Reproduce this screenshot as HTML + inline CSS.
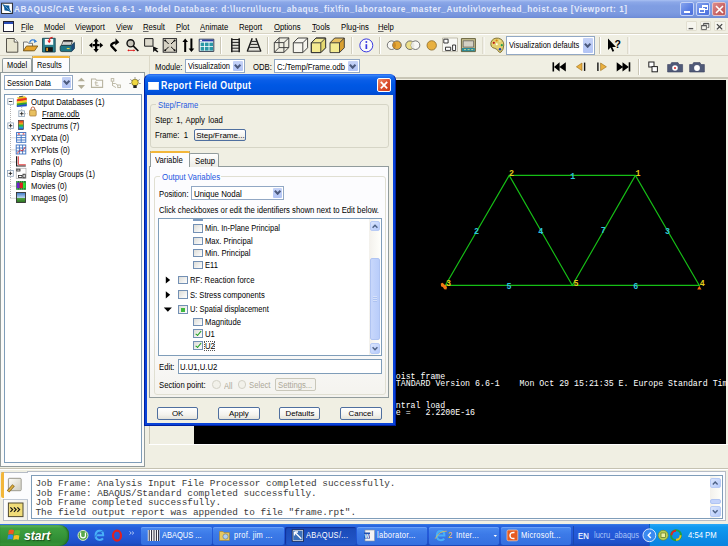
<!DOCTYPE html>
<html><head><meta charset="utf-8">
<style>
*{margin:0;padding:0;box-sizing:border-box}
html,body{width:728px;height:546px;overflow:hidden;background:#F0EFE3;font-family:"Liberation Sans",sans-serif;font-size:7.7px;color:#000}
.a{position:absolute}
.t{position:absolute;white-space:nowrap;line-height:10px;height:10px;transform:scaleX(0.909);transform-origin:0 50%}
svg{position:absolute;overflow:visible}
/* title */
#title{left:0;top:0;width:728px;height:18px;background:linear-gradient(#a9c0f2 0,#8ca8e8 2px,#7f9de2 6px,#7e9ce1 12px,#7593dc 16px,#6c8ad4 18px)}
.tb{position:absolute;top:2px;width:14px;height:14px;border:1px solid #c4d2f6;border-radius:2px;background:linear-gradient(135deg,#86a4ee,#5a7ee2 60%,#4c70dc)}
/* menu */
.mi{position:absolute;top:22px;line-height:10px;white-space:nowrap;transform:scaleX(0.909);transform-origin:0 50%}
.sep{position:absolute;width:2px;border-left:1px solid #c5c2b2;border-right:1px solid #fff}
.combo{position:absolute;background:#fff;border:1px solid #92a8c4}
.dd{position:absolute;top:1px;right:1px;bottom:1px;width:10px;background:linear-gradient(#c6d3f7,#b2c4f5);border-radius:1px}
.dd:after{content:"";position:absolute;left:50%;top:50%;width:3.3px;height:3.3px;margin-left:-2.7px;margin-top:-3.6px;border-right:2.1px solid #4d5b7e;border-bottom:2.1px solid #4d5b7e;transform:rotate(45deg)}
.btn{position:absolute;border:1px solid #4f6f9f;border-radius:2px;background:linear-gradient(#fff,#f4f3ee 60%,#e3e2da);text-align:center;line-height:11px;white-space:nowrap}
.cb{position:absolute;width:9px;height:9px;border:1px solid #7390b4;background:linear-gradient(135deg,#dcdcd7,#fff)}
.ck:after{content:"";position:absolute;left:2.4px;top:-0.2px;width:2.4px;height:4.6px;border-right:1.6px solid #21a121;border-bottom:1.6px solid #21a121;transform:rotate(40deg)}
.mono{font-family:"Liberation Mono",monospace}
</style></head><body>

<!-- TITLE BAR -->
<div id="title" class="a"></div>
<svg style="left:0;top:0" width="16" height="16"><rect x="1.6" y="3.2" width="10.8" height="10.3" fill="#fff" stroke="#1a1a1a" stroke-width="0.9"/>
<path d="M2.1 3.7Q5.5 5.8 9.3 5.6Q8.8 9 11.9 13Q8 10.4 4.6 10.6Q5 7.2 2.1 3.7Z" fill="#0a5a9a"/>
<path d="M4.8 5.8L10 11" stroke="#d0e4f4" stroke-width="0.7" stroke-dasharray="1 0.8"/></svg>
<div class="t" style="transform:scaleX(0.84);left:14px;top:4px;color:#e4eafb;font-weight:bold;font-size:9.8px;letter-spacing:0.66px">ABAQUS/CAE Version 6.6-1 - Model Database: d:\lucru\lucru_abaqus_fix\fin_laboratoare_master_Autoliv\overhead_hoist.cae [Viewport: 1]</div>
<div class="tb" style="left:680px"><div class="a" style="left:3px;top:8px;width:6px;height:2px;background:#fff"></div></div>
<div class="tb" style="left:696px"><div class="a" style="left:5px;top:2px;width:6px;height:5px;border:1px solid #fff;border-top-width:2px"></div><div class="a" style="left:2px;top:5px;width:6px;height:5px;border:1px solid #fff;border-top-width:2px;background:#6384e2"></div></div>
<div class="tb" style="left:712px;border-color:#e8c0c0;background:linear-gradient(135deg,#dc8a8a,#c86464 60%,#bc5858)"><svg style="left:2px;top:2px" width="9" height="9"><path d="M1 1L8 8M8 1L1 8" stroke="#fff" stroke-width="1.6"/></svg></div>

<!-- MENU BAR -->
<div class="a" style="left:0;top:33px;width:728px;height:1px;background:#d8d4c4"></div>
<div class="a" style="left:3px;top:21px;width:11px;height:11px;border:1px solid #223;background:#fff"><div class="a" style="left:0;top:0;width:9px;height:2px;background:#2a4db8"></div></div>
<div class="mi" style="font-size:8.47px;left:20.6px"><span style="text-decoration:underline;text-underline-offset:0.8px;text-decoration-thickness:0.8px;text-decoration-color:#666">F</span>ile</div>
<div class="mi" style="font-size:8.47px;left:43.7px"><span style="text-decoration:underline;text-underline-offset:0.8px;text-decoration-thickness:0.8px;text-decoration-color:#666">M</span>odel</div>
<div class="mi" style="font-size:8.47px;left:75px">Vie<span style="text-decoration:underline;text-underline-offset:0.8px;text-decoration-thickness:0.8px;text-decoration-color:#666">w</span>port</div>
<div class="mi" style="font-size:8.47px;left:116.3px"><span style="text-decoration:underline;text-underline-offset:0.8px;text-decoration-thickness:0.8px;text-decoration-color:#666">V</span>iew</div>
<div class="mi" style="font-size:8.47px;left:143px"><span style="text-decoration:underline;text-underline-offset:0.8px;text-decoration-thickness:0.8px;text-decoration-color:#666">R</span>esult</div>
<div class="mi" style="font-size:8.47px;left:176px"><span style="text-decoration:underline;text-underline-offset:0.8px;text-decoration-thickness:0.8px;text-decoration-color:#666">P</span>lot</div>
<div class="mi" style="font-size:8.47px;left:200.3px"><span style="text-decoration:underline;text-underline-offset:0.8px;text-decoration-thickness:0.8px;text-decoration-color:#666">A</span>nimate</div>
<div class="mi" style="font-size:8.47px;left:238.9px">Re<span style="text-decoration:underline;text-underline-offset:0.8px;text-decoration-thickness:0.8px;text-decoration-color:#666">p</span>ort</div>
<div class="mi" style="font-size:8.47px;left:274.4px"><span style="text-decoration:underline;text-underline-offset:0.8px;text-decoration-thickness:0.8px;text-decoration-color:#666">O</span>ptions</div>
<div class="mi" style="font-size:8.47px;left:311.7px"><span style="text-decoration:underline;text-underline-offset:0.8px;text-decoration-thickness:0.8px;text-decoration-color:#666">T</span>ools</div>
<div class="mi" style="font-size:8.47px;left:341px">Plu<span style="text-decoration:underline;text-underline-offset:0.8px;text-decoration-thickness:0.8px;text-decoration-color:#666">g</span>-ins</div>
<div class="mi" style="font-size:8.47px;left:378.3px"><span style="text-decoration:underline;text-underline-offset:0.8px;text-decoration-thickness:0.8px;text-decoration-color:#666">H</span>elp</div>
<!-- mdi buttons -->
<div class="a" style="left:686px;top:21.4px;width:10.5px;height:10px;border:1px solid #e2dfd0;border-radius:1px;background:#f6f5ee"></div>
<div class="a" style="left:699.5px;top:21.4px;width:11.5px;height:10px;border:1px solid #e2dfd0;border-radius:1px;background:#f6f5ee"></div>
<div class="a" style="left:713.5px;top:21.4px;width:12px;height:10px;border:1px solid #e2dfd0;border-radius:1px;background:#f6f5ee"></div>
<svg style="left:0;top:0" width="728" height="34">
<path d="M688.6 28.6H693.2" stroke="#555" stroke-width="1.3"/>
<path d="M703.6 23.4H708.8V27.6H707.4M703.6 23.4V25.2M701.6 25.4H706.4V29.6H701.6Z" stroke="#555" stroke-width="0.9" fill="none"/>
<path d="M701.6 25.6H706.4M703.6 23.6H708.8" stroke="#555" stroke-width="1.4"/>
<path d="M716.9 24.1L722.2 29.4M722.2 24.1L716.9 29.4" stroke="#444" stroke-width="1.3"/>
</svg>
<!-- TOOLBAR ROW 1 -->
<div class="a" style="left:0;top:34px;width:728px;height:1px;background:#fff"></div>
<div class="a" style="left:0;top:55px;width:728px;height:1px;background:#d6d2c2"></div>
<svg style="left:0;top:0" width="728" height="60">
<g stroke-linejoin="round">
<!-- new doc -->
<path d="M6.5 38.5H14.2L17.8 42.1V52.2H6.5Z" fill="#e8e5d0" stroke="#55524a" stroke-width="1"/>
<path d="M14.2 38.5V42.1H17.8" fill="#fff" stroke="#55524a" stroke-width="0.9"/>
<!-- open folder -->
<path d="M23.5 42H27.5L28.5 43.3H32.5V50.6H23.5Z" fill="#f7f7f2" stroke="#6a6a6a" stroke-width="0.9"/>
<path d="M23.3 50.8L26.5 46H37.8L34.5 50.8Z" fill="#e9a52a" stroke="#7a5a18" stroke-width="0.9"/>
<path d="M29.5 42.5Q31.5 38.3 35.6 40.8" stroke="#3c82d6" stroke-width="1.3" fill="none"/>
<path d="M34.2 39.2L37.2 41.6L34 43Z" fill="#3c82d6"/>
<!-- save -->
<path d="M42.5 38.3H55.2V52H42.5Z" fill="#2b7f8c" stroke="#1d4855" stroke-width="0.9"/>
<rect x="44.8" y="39" width="8.4" height="5.8" fill="#fafafa"/>
<rect x="45.2" y="47.2" width="7.6" height="4.6" fill="#141414"/>
<rect x="46.3" y="47.8" width="1.6" height="3.2" fill="#e9a020"/>
<path d="M52.6 37.3Q49.2 37.8 49.2 40.8" stroke="#e02020" stroke-width="1.2" fill="none"/><path d="M47.3 40.4H51.1L49.2 43.3Z" fill="#e02020"/>
<!-- print -->
<path d="M63.2 41H72.4L70.6 45.6H61.4Z" fill="#f4f4f2" stroke="#333" stroke-width="0.8"/>
<rect x="63.3" y="40" width="9.2" height="1.6" fill="#2a2a2a"/>
<path d="M63.6 42.8H70.6M63 44.2H70" stroke="#999" stroke-width="0.7"/>
<path d="M60.2 47Q60.2 45.4 61.8 45.4H71.2L74.4 42.4V48.6L71.6 51.6H61.8Q60.2 51.6 60.2 50Z" fill="#1f7686" stroke="#15343e" stroke-width="0.8"/>
<path d="M71.2 45.4L74.4 42.4V48.6L71.6 51.6Z" fill="#1f4a78"/>
<rect x="66.8" y="48" width="2.8" height="1.1" fill="#e8d040"/>
<!-- sep -->
<rect x="81" y="37" width="1" height="17" fill="#cbc7b6"/><rect x="82" y="37" width="1" height="17" fill="#fff"/>
<!-- move -->
<path d="M96.1 41V49.6M92.6 45.2H99.6" stroke="#000" stroke-width="2.3"/>
<path d="M96.1 38.2L98.8 41.4H93.4Z M96.1 52.4L98.8 49.1H93.4Z M89 45.2L92.3 42.5V47.9Z M103.2 45.2L99.9 42.5V47.9Z" fill="#000"/>
<!-- rotate -->
<path d="M116.3 51.3L111.6 46.2Q110.8 45.2 111.6 44.2Q113 42.6 115.8 42.4" stroke="#000" stroke-width="2.4" fill="none" stroke-linejoin="round"/>
<path d="M115.6 38.3L119.3 42.2L115.2 45.5Z" fill="#000"/>
<!-- zoom -->
<circle cx="130.6" cy="43.3" r="3.6" fill="#c9c6bb" stroke="#111" stroke-width="1.4"/>
<path d="M133.2 45.9L138.3 51" stroke="#111" stroke-width="1.7"/>
<path d="M128 50.4H134.5" stroke="#e01818" stroke-width="0.9"/><path d="M127.3 50.4L129 49.2V51.6Z M135.2 50.4L133.5 49.2V51.6Z" fill="#e01818"/>
<!-- box zoom -->
<rect x="144.6" y="38.6" width="8.4" height="7.6" fill="#dcd9cc" stroke="#222" stroke-width="1"/>
<path d="M153 46.3L153.2 52.3L154.8 50.6L157.4 52.6L158.4 51.4L156 49.5L158.4 48.7Z" fill="#111"/>
<!-- fit -->
<rect x="163.2" y="38.5" width="13.3" height="13.8" fill="#d6d2c4" stroke="#3a3a3a" stroke-width="1.1"/>
<path d="M165 40.3L168.7 44M174.8 40.3L171 44M165 50.5L168.7 46.8M174.8 50.5L171 46.8" stroke="#111" stroke-width="1"/>
<circle cx="165.2" cy="40.5" r="1" fill="#111"/><circle cx="174.6" cy="40.5" r="1" fill="#111"/><circle cx="165.2" cy="50.3" r="1" fill="#111"/><circle cx="174.6" cy="50.3" r="1" fill="#111"/>
<!-- up/down arrows -->
<path d="M185.2 38.4L188 42H186.2V52H184.2V42H182.4Z" fill="#000"/>
<path d="M191.4 52.1L194.3 48.4H192.4V38.5H190.4V48.4H188.6Z" fill="#000"/>
<!-- table -->
<rect x="199.2" y="39.2" width="14.6" height="12.2" fill="#fff" stroke="#1d2a40" stroke-width="0.9"/>
<rect x="199.6" y="39.6" width="13.8" height="1.8" fill="#2a3fa8"/><rect x="200" y="39.8" width="2" height="1.3" fill="#fff"/>
<rect x="200.6" y="42.6" width="3.6" height="3.6" fill="#2b98a6"/><rect x="205" y="42.6" width="3.6" height="3.6" fill="#2b98a6"/><rect x="209.4" y="42.6" width="3.6" height="3.6" fill="#2b98a6"/>
<rect x="200.6" y="47" width="3.6" height="3.6" fill="#2b98a6"/><rect x="205" y="47" width="3.6" height="3.6" fill="#2b98a6"/><rect x="209.4" y="47" width="3.6" height="3.6" fill="#2b98a6"/>
<!-- sep -->
<rect x="220" y="37" width="1" height="17" fill="#cbc7b6"/><rect x="221" y="37" width="1" height="17" fill="#fff"/>
<!-- ladder -->
<rect x="232" y="39" width="7" height="12.6" fill="#e2e1da"/>
<path d="M231.8 38.3V52.2M239.2 38.3V52.2" stroke="#1a1a1a" stroke-width="1.5"/>
<path d="M231.8 39.5H239.2M231.8 42.4H239.2M231.8 45.3H239.2M231.8 48.2H239.2M231.8 51.2H239.2" stroke="#222" stroke-width="1"/>
<!-- pyramid -->
<path d="M247.6 51.2L260.4 51.2L256.2 38.8L255.5 40.5H252.6L252 38.8Z" fill="#e2e1da"/>
<path d="M252.2 38.3L247.2 51.6M255.9 38.3L260.9 51.6" stroke="#1a1a1a" stroke-width="1.4"/>
<path d="M251.5 41.4H256.7M250.4 44.4H257.7M249.3 47.4H258.8M247.6 51.2H260.6" stroke="#222" stroke-width="1"/>
<!-- sep -->
<rect x="267" y="37" width="1" height="17" fill="#cbc7b6"/><rect x="268" y="37" width="1" height="17" fill="#fff"/>
<!-- wire cube -->
<path d="M274.3 42.6H283.9V52.4H274.3Z M279 37.9H288.8V47.6H279Z M274.3 42.6L279 37.9M283.9 42.6L288.8 37.9M283.9 52.4L288.8 47.6M274.3 52.4L279 47.6" fill="none" stroke="#333" stroke-width="0.9"/>
<!-- hidden cube -->
<path d="M293.3 42.8L298 38H307.6V47.8L302.8 52.6H293.3Z" fill="#f5f4ee" stroke="#333" stroke-width="0.9"/>
<path d="M293.3 42.8H302.8V52.6M302.8 42.8L307.6 38" fill="none" stroke="#333" stroke-width="0.9"/>
<!-- yellow cube -->
<path d="M311.3 42.8L316 38H325.6V47.8L320.8 52.6H311.3Z" fill="#f4eb92" stroke="#333" stroke-width="0.9"/>
<path d="M320.8 42.8L325.6 38V47.8L320.8 52.6Z" fill="#e4d870"/>
<path d="M311.3 42.8H320.8V52.6M320.8 42.8L325.6 38M311.3 42.8L316 38H325.6V47.8L320.8 52.6H311.3Z" fill="none" stroke="#333" stroke-width="0.9"/>
<!-- shaded cube -->
<path d="M330 42.8L334.7 38H344.3V47.8L339.5 52.6H330Z" fill="#f4eb92"/>
<path d="M330 42.8L334.7 38H344.3L339.5 42.8Z" fill="#e8c060"/>
<path d="M339.5 42.8L344.3 38V47.8L339.5 52.6Z" fill="#d9a030"/>
<path d="M330 42.8H339.5V52.6M339.5 42.8L344.3 38M330 42.8L334.7 38H344.3V47.8L339.5 52.6H330Z" fill="none" stroke="#333" stroke-width="0.9"/>
<!-- sep -->
<rect x="351.2" y="37" width="1" height="17" fill="#cbc7b6"/><rect x="352.2" y="37" width="1" height="17" fill="#fff"/>
<!-- info -->
<circle cx="366.3" cy="45.4" r="6.5" fill="#fbfbfb" stroke="#3a3ae0" stroke-width="1"/>
<rect x="365.5" y="44.2" width="1.7" height="4.8" fill="#3a3ae0"/><circle cx="366.35" cy="42" r="0.95" fill="#3a3ae0"/>
<!-- sep -->
<rect x="379" y="37" width="1" height="17" fill="#cbc7b6"/><rect x="380" y="37" width="1" height="17" fill="#fff"/>
<!-- venn1 -->
<circle cx="391.6" cy="45.2" r="4.3" fill="#f8f8f4" stroke="#555" stroke-width="0.8"/>
<circle cx="397" cy="45.2" r="4.3" fill="#e5a838" stroke="#555" stroke-width="0.8"/>
<path d="M394.3 41.8A4.3 4.3 0 0 1 394.3 48.6A4.3 4.3 0 0 1 394.3 41.8Z" fill="#c98a28"/>
<!-- venn2 -->
<circle cx="410" cy="45.2" r="4.3" fill="#ecde88" stroke="#555" stroke-width="0.8"/>
<circle cx="415.5" cy="45.2" r="4.3" fill="#f8f8f4" stroke="#555" stroke-width="0.8"/>
<path d="M412.75 41.8A4.3 4.3 0 0 1 412.75 48.6A4.3 4.3 0 0 1 412.75 41.8Z" fill="#e6e6e0"/>
<!-- orange circle -->
<circle cx="431.7" cy="45.4" r="4.7" fill="#e8b040" stroke="#8a6a28" stroke-width="0.8"/>
<!-- display group -->
<rect x="442.5" y="38" width="15" height="13.6" fill="#f8f8f4" stroke="#b4b0a0" stroke-width="0.8"/>
<rect x="443.8" y="39.2" width="4.3" height="3.8" fill="#fff" stroke="#222" stroke-width="0.9"/>
<rect x="445.5" y="47.2" width="5.2" height="3.2" fill="#fff" stroke="#222" stroke-width="0.9"/>
<rect x="452.6" y="45" width="3" height="5.5" fill="#fff" stroke="#222" stroke-width="0.9"/>
<!-- monitor -->
<rect x="461.4" y="38.6" width="14" height="13" fill="#c9c090" stroke="#5a5530" stroke-width="0.9"/>
<rect x="463.2" y="40.8" width="10.4" height="6.3" fill="#d4d0c4" stroke="#555" stroke-width="0.7"/>
<rect x="462" y="48" width="12.8" height="3.2" fill="#2b8a98"/>
<path d="M464 49.6H466M467.6 49.6H469.6M471.2 49.6H473.2" stroke="#e8e890" stroke-width="0.8"/>
<!-- sep -->
<rect x="482.5" y="37" width="1" height="17" fill="#cbc7b6"/><rect x="483.5" y="37" width="1" height="17" fill="#fff"/>
<!-- palette -->
<path d="M491 42.2Q493 37.4 498.5 38.2Q503.8 39.5 503.8 45Q503.6 50 501 52.2Q499 53 498 50.8Q497 48.8 494.5 48.3Q490 47.5 491 42.2Z" fill="#e4d070" stroke="#6a5a20" stroke-width="0.8"/>
<circle cx="493.8" cy="42.8" r="1.1" fill="#c01818"/><circle cx="496.6" cy="40.5" r="1.1" fill="#e08010"/><circle cx="499.8" cy="41" r="1" fill="#e8e8a0"/><circle cx="496.8" cy="44.2" r="1" fill="#fff"/><circle cx="501.8" cy="45.2" r="1.1" fill="#20a050"/><circle cx="500" cy="49.2" r="1.2" fill="#2040b0"/>
<!-- help cursor -->
<path d="M608 38.5V50L610.6 47.6L612.5 51.8L614.2 51L612.3 47H616Z" fill="#000"/>
<text x="614.6" y="47.5" font-family="Liberation Sans" font-weight="bold" font-size="10.5px" fill="#000">?</text>
<!-- seps -->
<rect x="599" y="37" width="1" height="17" fill="#cbc7b6"/><rect x="600" y="37" width="1" height="17" fill="#fff"/>
<rect x="627.5" y="37" width="1" height="17" fill="#cbc7b6"/><rect x="628.5" y="37" width="1" height="17" fill="#fff"/>
</g>
</svg>
<div class="combo" style="left:506px;top:36.3px;width:89px;height:18.3px"><div class="t" style="font-size:8.25px;left:2px;top:3.6px">Visualization defaults</div><div class="dd" style="width:10px"></div></div>


<!-- ROW 2 -->
<div class="a" style="left:148.8px;top:56px;width:1px;height:21px;background:#dcd9c8"></div>
<div class="t" style="font-size:8.47px;left:155px;top:61.5px">Module:</div>
<div class="combo" style="left:185.3px;top:59.3px;width:59.4px;height:14.2px"><div class="t" style="font-size:8.25px;left:1.5px;top:1.6px">Visualization</div><div class="dd"></div></div>
<div class="t" style="font-size:8.47px;left:253px;top:61.5px">ODB:</div>
<div class="combo" style="left:273.6px;top:59.3px;width:86.4px;height:14.2px"><div class="t" style="font-size:8.47px;left:2.5px;top:1.6px">C:/Temp/Frame.odb</div><div class="dd"></div></div>
<svg style="left:0;top:0" width="728" height="80">
<!-- first -->
<path d="M553.3 62.3V71.5" stroke="#000" stroke-width="1.6"/>
<path d="M554 66.9L559.6 62.2V71.6Z M559.4 66.9L565.8 62.2V71.6Z" fill="#000"/>
<!-- prev -->
<path d="M576.4 66.8L582 63V70.6Z" fill="#eab040" stroke="#9a6a10" stroke-width="0.6"/>
<path d="M584.6 62.6V70.9" stroke="#111" stroke-width="1.4"/>
<!-- next -->
<path d="M597.9 62.6V70.9" stroke="#111" stroke-width="1.4"/>
<path d="M606.4 66.8L600.6 63V70.6Z" fill="#eab040" stroke="#9a6a10" stroke-width="0.6"/>
<!-- last -->
<path d="M616.7 62.2L623.1 66.9L616.7 71.6Z M622.5 62.2L628.8 66.9L622.5 71.6Z" fill="#000"/>
<path d="M629.5 62.3V71.5" stroke="#000" stroke-width="1.6"/>
<rect x="638" y="59" width="1" height="16" fill="#cbc7b6"/><rect x="639" y="59" width="1" height="16" fill="#fff"/>
<!-- overlay icon -->
<rect x="648.8" y="62" width="5.2" height="5" fill="#fff" stroke="#222" stroke-width="1"/>
<rect x="652" y="66.6" width="5.4" height="5.2" fill="#fff" stroke="#222" stroke-width="1"/>
<!-- camera 1 -->
<path d="M667.6 64.5H670.5L671.6 62.6H678L679 64.5H682.6V72H667.6Z" fill="#505a78" stroke="#3a4260" stroke-width="0.6"/>
<circle cx="675" cy="68" r="2.8" fill="#fff"/><circle cx="675" cy="68" r="1" fill="#e02020"/>
<!-- camera 2 -->
<path d="M689.6 64.5H692.5L693.6 62.6H700L701 64.5H704.4V72H689.6Z" fill="#505a78" stroke="#3a4260" stroke-width="0.6"/>
<circle cx="697" cy="68" r="2.9" fill="#fff"/>
</svg>


<!-- LEFT PANEL -->
<div class="a" style="left:0;top:71.5px;width:144.5px;height:395px;border:1px solid #919b9c;background:#fbfbf9"></div>
<div class="a" style="left:1.6px;top:57.8px;width:30.5px;height:14px;border:1px solid #919b9c;border-bottom:none;border-radius:2px 2px 0 0;background:linear-gradient(#fefefe,#ecebe5)"></div>
<div class="t" style="left:6.6px;top:61.3px;font-size:8.14px">Model</div>
<div class="a" style="left:31.9px;top:56.2px;width:38px;height:16.3px;border:1px solid #919b9c;border-top:none;border-bottom:none;background:#fcfcfe"></div>
<div class="a" style="left:31.9px;top:56.2px;width:38px;height:2.2px;background:#f2b63a;border-radius:2px 2px 0 0"></div>
<div class="t" style="left:37.2px;top:60.5px;font-size:8.14px">Results</div>
<div class="combo" style="left:4.4px;top:75.4px;width:68.3px;height:14.6px"><div class="t" style="left:1.6px;top:2.2px;font-size:8.15px">Session Data</div><div class="dd" style="width:9px"></div></div>
<svg style="left:0;top:0" width="150" height="100">
<path d="M77.7 81.3L81.35 77.7L85 81.3Z M77.7 85L81.35 89L85 85Z" fill="#b3ae98"/>
<path d="M91.5 79H95.5L96.5 80.3H102.6V87.4H91.5Z" fill="none" stroke="#b8b4a0" stroke-width="1.1"/>
<path d="M94.6 82.8H97.8M95.8 81.2V85.4H98.6" stroke="#bdb8a4" stroke-width="0.9" fill="none"/>
<rect x="111.2" y="78.6" width="2.6" height="2.6" fill="none" stroke="#b8b4a0" stroke-width="0.9"/>
<rect x="117.8" y="85" width="2.6" height="2.6" fill="none" stroke="#b8b4a0" stroke-width="0.9"/>
<path d="M112.5 81.5V86M112.5 83.5H115.5L118 85.5M113 85.8L116 87.6" stroke="#b8b4a0" stroke-width="0.9" fill="none"/>
<path d="M130.5 79.5L131.8 80.6M139.5 79.5L138.2 80.6M135 77.3V78.6M129.5 83.5H130.8M140.5 83.5H139.2" stroke="#555" stroke-width="0.8"/>
<circle cx="135" cy="82.5" r="3.3" fill="#f0d840" stroke="#6a6020" stroke-width="0.7"/>
<rect x="133.3" y="85.2" width="3.4" height="2.8" fill="#222"/>
</svg>
<div class="a" style="left:4.1px;top:94.1px;width:138px;height:369.4px;border:1px solid #7f9db9;background:#fff"></div>
<svg style="left:0;top:0" width="145" height="210">
<!-- dotted lines -->
<path d="M10.5 105V198.5M10.5 137.8H15.5M10.5 149.9H15.5M10.5 162H15.5M10.5 186.2H15.5M10.5 198.3H15.5M21.7 107V113.7H27.5" stroke="#a0a0a0" stroke-width="0.8" stroke-dasharray="1 1" fill="none"/>
<!-- expanders -->
<g fill="#fff" stroke="#8ea2b8" stroke-width="0.8">
<rect x="7.8" y="98.7" width="5.6" height="5.6"/>
<rect x="18.8" y="110.8" width="5.8" height="5.8"/>
<rect x="7.8" y="122.9" width="5.6" height="5.6"/>
<rect x="7.5" y="170.5" width="5.8" height="5.8"/>
</g>
<path d="M8.9 101.5H12.3 M19.8 113.7H23.6M21.7 111.8V115.6 M8.9 125.7H12.3M10.6 123.9V127.5 M8.6 173.4H12.2M10.4 171.6V175.2" stroke="#222" stroke-width="0.9"/>
<!-- odb stack icon -->
<path d="M16.8 97.6L25 96.3L26.8 98.3L18.5 99.6Z" fill="#e8c020"/>
<path d="M16.8 99.2L26.8 97.8V100.4L16.8 101.7Z" fill="#e83020"/>
<path d="M16.8 101.5L26.8 100.1V102.6L16.8 104Z" fill="#f0d020"/>
<path d="M16.8 103.6L26.8 102.2V104.6L16.8 106Z" fill="#30a030"/>
<path d="M16.8 105.5L26.8 104.1V106.2L16.8 107Z" fill="#2050c8"/>
<path d="M19 96.8L23.2 96.2" stroke="#222" stroke-width="0.8"/>
<!-- lock -->
<path d="M31 110.2V109.2Q31 106.9 32.9 106.9Q34.8 106.9 34.8 109.2V110.2" stroke="#c05a30" stroke-width="0.9" fill="none"/>
<rect x="29.6" y="110" width="6.6" height="6" rx="1" fill="#e8c060" stroke="#a07030" stroke-width="0.7"/>
<!-- spectrum -->
<defs><linearGradient id="spec" x1="0" y1="0" x2="0" y2="1"><stop offset="0" stop-color="#e02020"/><stop offset="0.35" stop-color="#f0a020"/><stop offset="0.55" stop-color="#30c030"/><stop offset="0.8" stop-color="#20a0e0"/><stop offset="1" stop-color="#2030c0"/></linearGradient>
<linearGradient id="sky" x1="0" y1="0" x2="0" y2="1"><stop offset="0" stop-color="#3a78c8"/><stop offset="0.55" stop-color="#c0d8f0"/><stop offset="0.6" stop-color="#50a040"/><stop offset="1" stop-color="#2a7020"/></linearGradient></defs>
<rect x="18.4" y="120.4" width="5" height="9.2" fill="url(#spec)" stroke="#333" stroke-width="0.6"/>
<!-- xydata -->
<rect x="16.6" y="132.5" width="9.2" height="9.8" fill="#fff" stroke="#3a6fc0" stroke-width="0.9"/>
<path d="M16.6 135.2H25.8M16.6 137.6H25.8M16.6 140H25.8M21.2 135.2V142.3" stroke="#3a6fc0" stroke-width="0.9"/>
<path d="M18 133.2L19.8 134.6M19.8 133.2L18 134.6M22.6 133.2L24.4 134.6M24.4 133.2L22.6 134.6" stroke="#e02020" stroke-width="0.6"/>
<!-- xyplots -->
<rect x="16.2" y="145" width="9.6" height="9" fill="#fff" stroke="#3a6fc0" stroke-width="0.9"/>
<path d="M19.4 145V154M22.6 145V154M16.2 148H25.8M16.2 151H25.8" stroke="#3a6fc0" stroke-width="0.9"/>
<path d="M17 153.4L20.5 150L22.5 151L25.3 147" stroke="#e02020" stroke-width="0.8" fill="none"/>
<!-- paths -->
<path d="M16.6 156.3V166H25.8" stroke="#222" stroke-width="1.2" fill="none"/>
<path d="M18.3 156.3V164.2Q18.3 164.8 19 164.8H25.8" stroke="#e02020" stroke-width="0.9" fill="none"/>
<!-- display groups -->
<rect x="16.2" y="168.2" width="9.8" height="10.3" fill="#fff" stroke="#999" stroke-width="0.6"/>
<rect x="16.8" y="169.2" width="3.2" height="1.8" fill="none" stroke="#222" stroke-width="0.8"/>
<rect x="18.4" y="175.4" width="3.6" height="2.2" fill="none" stroke="#222" stroke-width="0.8"/>
<rect x="23" y="174.2" width="2.2" height="3.6" fill="none" stroke="#222" stroke-width="0.8"/>
<!-- movies -->
<rect x="16.2" y="181" width="9.8" height="8.8" fill="#208030"/>
<rect x="16.8" y="182.6" width="2.8" height="5.6" fill="#7020d0"/><rect x="19.8" y="182.6" width="3" height="5.6" fill="#e02020"/><rect x="23" y="182.6" width="2.6" height="5.6" fill="#30e030"/>
<path d="M17 181.8H25.5M17 189H25.5" stroke="#a0e0a0" stroke-width="0.6" stroke-dasharray="1 1"/>
<!-- images -->
<rect x="16.5" y="192.5" width="9" height="10" fill="url(#sky)" stroke="#333" stroke-width="0.9"/>
</svg>
<div class="t" style="font-size:8.47px;left:30.8px;top:96.5px">Output Databases (1)</div>
<div class="t" style="font-size:8.47px;left:42.3px;top:108.6px">Frame.odb</div>
<div class="a" style="left:42.3px;top:117.8px;width:37.3px;height:1.2px;background:#000"></div>
<div class="t" style="font-size:8.47px;left:30.8px;top:120.7px">Spectrums (7)</div>
<div class="t" style="font-size:8.47px;left:30.8px;top:132.8px">XYData (0)</div>
<div class="t" style="font-size:8.47px;left:30.8px;top:144.9px">XYPlots (0)</div>
<div class="t" style="font-size:8.47px;left:30.8px;top:157px">Paths (0)</div>
<div class="t" style="font-size:8.47px;left:30.8px;top:169.1px">Display Groups (1)</div>
<div class="t" style="font-size:8.47px;left:30.8px;top:181.2px">Movies (0)</div>
<div class="t" style="font-size:8.47px;left:30.8px;top:193.3px">Images (0)</div>



<!-- VIEWPORT -->
<div class="a" style="left:194px;top:77px;width:534px;height:2px;background:#c9c6b6"></div>
<div class="a" style="left:194px;top:79.5px;width:532.4px;height:364.2px;background:#000"></div>
<div class="a" style="left:148.5px;top:444px;width:579.5px;height:1.2px;background:#fff"></div>
<div class="a" style="left:148.5px;top:426px;width:1px;height:18px;background:#c9c6b6"></div>
<svg style="left:0;top:0" width="728" height="446">
<g stroke="#16be16" stroke-width="1.15" fill="none">
<path d="M509.2 175.4H635.4L699.3 285.4H445.3Z"/>
<path d="M509.2 175.4L572.3 285.4L635.4 175.4"/>
</g>
<path d="M440.8 283.6L442.8 282.8L444.2 284.4L446 285.2L447 287.6L446.4 289.6L444.2 289.2L443 287.2L441 286.2Z" fill="#f27812"/>
<path d="M697.2 289.5L699.3 285.8L701.5 289.5Z" fill="#f07010"/>
<g font-family="Liberation Mono" font-size="8.4px" font-weight="bold" fill="#e4cc1c">
<text x="509" y="175.8">2</text>
<text x="635.6" y="175.8">1</text>
<text x="446" y="285.6">3</text>
<text x="573.6" y="285.6">5</text>
<text x="699.8" y="285.8">4</text>
</g>
<g font-family="Liberation Mono" font-size="8.4px" font-weight="bold" fill="#30c4dc">
<text x="570.2" y="178.8">1</text>
<text x="474.1" y="234">2</text>
<text x="538.2" y="234">4</text>
<text x="600.7" y="233.4">7</text>
<text x="665" y="234">3</text>
<text x="506.6" y="289">5</text>
<text x="633.3" y="289">6</text>
</g>
<g font-family="Liberation Mono" font-size="8.25px" fill="#fff" style="white-space:pre">
<text x="371" y="378.6">ead hoist frame</text>
<text x="356.2" y="385.6">ABAQUS/STANDARD Version 6.6-1&#160;&#160;&#160; Mon Oct 29 15:21:35 E. Europe Standard Time 2007</text>
<text x="371" y="407.8">Concentral load</text>
<text x="381" y="415.2">Time =&#160;&#160; 2.2200E-16</text>
</g>
</svg>


<!-- MESSAGE AREA -->
<div class="a" style="left:0;top:468.2px;width:728px;height:1px;background:#c5c2b2"></div>
<div class="a" style="left:0;top:469.2px;width:728px;height:1px;background:#fff"></div>
<div class="a" style="left:27px;top:471.3px;width:698.5px;height:49.6px;border:1px solid #b6bcc6;border-left:none;background:#fcfcfe"></div>
<div class="a" style="left:1.2px;top:471.6px;width:27px;height:27px;background:#fcfcfe;border-top:1px solid #b6bcc6"></div>
<div class="a" style="left:1.2px;top:471.8px;width:2.6px;height:26.7px;background:#f2b63a;border-radius:2px 0 0 2px"></div>
<div class="a" style="left:3.3px;top:499.3px;width:24.4px;height:21.5px;border:1px solid #b6bcc6;border-top:none;background:linear-gradient(90deg,#fefefe,#f0efe8)"></div>
<div class="a" style="left:4px;top:498.5px;width:23.5px;height:1px;background:#c0c8d4"></div>
<svg style="left:0;top:0" width="40" height="546">
<rect x="8.4" y="478.3" width="12.8" height="12.4" rx="1" fill="#dcdad0" stroke="#8a887c" stroke-width="0.8"/>
<rect x="9.2" y="479" width="11" height="10.8" fill="url(#msgg)"/>
<defs><linearGradient id="msgg" x1="0" y1="0" x2="1" y2="1"><stop offset="0" stop-color="#fbfbf7"/><stop offset="1" stop-color="#d0cec2"/></linearGradient></defs>
<path d="M8 491.5L13.6 485.2" stroke="#8a6a20" stroke-width="3.2"/>
<path d="M8.3 491.2L13.3 485.5" stroke="#e0b040" stroke-width="1.6"/>
<rect x="8.4" y="503" width="14.6" height="13.6" fill="#f0dc78" stroke="#504a30" stroke-width="1"/>
<path d="M10.4 507.3L12.6 509.6L10.4 511.9M13.9 507.3L16.1 509.6L13.9 511.9M17.4 507.3L19.6 509.6L17.4 511.9" stroke="#111" stroke-width="1.2" fill="none"/>
</svg>
<div class="a" style="left:31px;top:475.4px;width:691.5px;height:43.4px;border:1px solid #7f9db9;background:#fff"></div>
<div class="a mono" style="left:35.4px;top:479.4px;font-size:9.4px;line-height:9.55px;white-space:pre;color:#3a3a3a">Job Frame: Analysis Input File Processor completed successfully.
Job Frame: ABAQUS/Standard completed successfully.
Job Frame completed successfully.
The field output report was appended to file "frame.rpt".</div>
<!-- scrollbar -->
<div class="a" style="left:710px;top:476.4px;width:11.4px;height:41.4px;background:linear-gradient(90deg,#f3f1ec,#fefefa)"></div>
<div class="a" style="left:710.2px;top:478px;width:10.4px;height:10.2px;border-radius:2px;background:linear-gradient(135deg,#dbe6fe,#b5cafa);border:0.6px solid #b8cbf5"></div>
<svg style="left:710.2px;top:478px" width="11" height="11"><path d="M2.8 6.6L5.2 4.1L7.6 6.6" stroke="#4d6185" stroke-width="1.4" fill="none"/></svg>
<div class="a" style="left:710.2px;top:498.7px;width:10.4px;height:5.5px;border-radius:2px;background:#c3d3fb;border:0.6px solid #b0c4f2"></div>
<div class="a" style="left:710.2px;top:506px;width:10.4px;height:11px;border-radius:2px;background:linear-gradient(135deg,#dbe6fe,#b5cafa);border:0.6px solid #b8cbf5"></div>
<svg style="left:710.2px;top:506px" width="11" height="11"><path d="M2.8 4.3L5.2 6.8L7.6 4.3" stroke="#4d6185" stroke-width="1.4" fill="none"/></svg>


<!-- TASKBAR -->
<div class="a" style="left:0;top:524.4px;width:728px;height:21.6px;background:linear-gradient(#3a7fe8 0,#2a68e0 1.5px,#245edb 4px,#2458d8 12px,#1e50c8 19px,#1a48b8 21.6px)"></div>
<div class="a" style="left:0;top:525px;width:68.7px;height:21px;border-radius:0 9px 9px 0;background:linear-gradient(#6cc06c 0,#3fa03f 3px,#36963a 10px,#2f8a32 17px,#3a9a3a 21px);box-shadow:inset -1px 0 2px #1c5c1c"></div>
<svg style="left:0;top:0" width="728" height="546">
<path d="M8.8 530.2Q11.5 529 14 530.2L13.3 534.6Q10.8 533.4 8.2 534.6Z" fill="#f05a20"/>
<path d="M14.6 530.6Q17.2 529.5 20.2 530.4L19.5 534.8Q16.8 533.8 14 535Z" fill="#60b830"/>
<path d="M8 535.2Q10.6 534 13.2 535.2L12.5 539.6Q10 538.4 7.4 539.6Z" fill="#3088e8"/>
<path d="M13.8 535.6Q16.4 534.5 19.4 535.4L18.7 539.8Q16 538.8 13.2 540Z" fill="#f8c020"/>
</svg>
<div class="t" style="transform:none;left:24px;top:529.3px;color:#fff;font-style:italic;font-weight:bold;font-size:12.2px;line-height:14px;height:14px;text-shadow:1px 1px 1px #1a4a1a">start</div>
<svg style="left:0;top:0" width="728" height="546">
<!-- quick launch -->
<circle cx="83" cy="535.4" r="5" fill="#5aa84a" stroke="#d8e8d0" stroke-width="1"/>
<path d="M80.6 532.5V535.8Q80.6 537.8 83 537.8Q85.4 537.8 85.4 535.8V532.5" stroke="#fff" stroke-width="1.2" fill="none"/>
<path d="M96.2 535.2H103.2Q103.2 530.8 99.6 530.8Q95.6 530.8 95.6 535.6Q95.6 540 99.8 540Q102 540 103 538.4" stroke="#48b0f8" stroke-width="2" fill="none"/><path d="M94 538.5Q98 530.5 105.5 531" stroke="#2a70d0" stroke-width="0.8" fill="none"/>
<ellipse cx="117" cy="535.6" rx="4" ry="5" fill="none" stroke="#e02020" stroke-width="2.2"/>
<path d="M129.5 531.5L131.3 533L129.5 534.5M132 531.5L133.8 533L132 534.5" stroke="#c8d8f8" stroke-width="0.8" fill="none"/>
</svg>
<!-- task buttons -->
<div class="a" style="left:141px;top:526.8px;width:71px;height:18.5px;border-radius:2px;background:linear-gradient(#4a8af0,#3c7ae8 40%,#3470e0);box-shadow:inset 0 1px 0 #6aa0f8"></div>
<div class="a" style="left:213px;top:526.8px;width:71px;height:18.5px;border-radius:2px;background:linear-gradient(#4a8af0,#3c7ae8 40%,#3470e0);box-shadow:inset 0 1px 0 #6aa0f8"></div>
<div class="a" style="left:284.5px;top:526.8px;width:71.3px;height:18.5px;border-radius:2px;background:linear-gradient(#1a4ab8,#1e50c0 50%,#2458c8);box-shadow:inset 1px 1px 1px #10309a"></div>
<div class="a" style="left:356.7px;top:526.8px;width:70px;height:18.5px;border-radius:2px;background:linear-gradient(#4a8af0,#3c7ae8 40%,#3470e0);box-shadow:inset 0 1px 0 #6aa0f8"></div>
<div class="a" style="left:428.8px;top:526.8px;width:70.2px;height:18.5px;border-radius:2px;background:linear-gradient(#4a8af0,#3c7ae8 40%,#3470e0);box-shadow:inset 0 1px 0 #6aa0f8"></div>
<div class="a" style="left:500.5px;top:526.8px;width:70px;height:18.5px;border-radius:2px;background:linear-gradient(#4a8af0,#3c7ae8 40%,#3470e0);box-shadow:inset 0 1px 0 #6aa0f8"></div>
<svg style="left:0;top:0" width="728" height="546">
<!-- icon1 abaqus tape -->
<rect x="147.8" y="530" width="11.8" height="11" fill="#fff"/>
<path d="M149.2 530V541M151.6 530V541M154 530V541M156.4 530V541M158.6 530V541" stroke="#223" stroke-width="1"/>
<!-- icon2 folder -->
<path d="M219.5 531.5H223L224 532.6H229.5V540.5H219.5Z" fill="#e8c860" stroke="#a08030" stroke-width="0.6"/>
<circle cx="225.5" cy="536.5" r="2.6" fill="#b0d0f0" stroke="#607080" stroke-width="0.6"/>
<!-- icon3 abaqus -->
<rect x="292.2" y="529.8" width="11.4" height="11.4" fill="#fff" stroke="#0a1a40" stroke-width="0.8"/>
<rect x="293.2" y="530.8" width="9.4" height="9.4" fill="#3a6fb8"/>
<path d="M294.5 532L301.3 538.8M294.5 532V535.5M294.5 532H298" stroke="#fff" stroke-width="1.3" fill="none"/>
<!-- icon4 word -->
<rect x="365" y="530" width="9.6" height="11" fill="#f4f4f4" stroke="#8090a0" stroke-width="0.6"/>
<rect x="364" y="532.5" width="6" height="6" fill="#2050b0"/>
<text x="364.6" y="537.8" font-family="Liberation Sans" font-weight="bold" font-size="5.5px" fill="#fff">W</text>
<!-- icon5 ie -->
<path d="M437.4 535.4H444.4Q444.4 531 440.8 531Q436.8 531 436.8 535.8Q436.8 540.2 441 540.2Q443.2 540.2 444.2 538.6" stroke="#48b0f8" stroke-width="2" fill="none"/><path d="M435.2 538.7Q439.2 530.7 446.7 531.2" stroke="#f0c040" stroke-width="0.8" fill="none"/>
<path d="M493.6 535L497 535L495.3 537Z" fill="#fff"/>
<!-- icon6 red -->
<rect x="507" y="530" width="10.8" height="10.8" rx="1.5" fill="#e85a20" stroke="#f8d0b0" stroke-width="0.7"/>
<path d="M514.5 532.5Q510 532 510 535.5Q510 539 514.5 538.5" stroke="#fff" stroke-width="1.5" fill="none"/>
</svg>
<div class="t" style="left:162px;top:530.6px;color:#fff;font-size:8.25px">ABAQUS ...</div>
<div class="t" style="letter-spacing:0.3px;left:233.6px;top:530.6px;color:#fff;font-size:8.25px">prof. jim ...</div>
<div class="t" style="letter-spacing:0.3px;left:305.6px;top:530.6px;color:#fff;font-size:8.25px">ABAQUS/...</div>
<div class="t" style="letter-spacing:0.3px;left:376.6px;top:530.6px;color:#fff;font-size:8.25px">laborator...</div>
<div class="t" style="left:448.4px;top:530.6px;color:#f8c040;font-size:8.25px">2</div>
<div class="t" style="letter-spacing:0.3px;left:456px;top:530.6px;color:#fff;font-size:8.25px">Inter...</div>
<div class="t" style="letter-spacing:0.3px;left:520.5px;top:530.6px;color:#fff;font-size:8.25px">Microsoft...</div>
<!-- language bar -->
<div class="a" style="left:573px;top:526px;width:1px;height:19px;background:#1a48b0"></div>
<div class="t" style="left:577.8px;top:530.6px;color:#fff;font-size:8.58px;text-shadow:0 0 1px #8ab0f0">EN</div>
<div class="t" style="left:593.8px;top:530.6px;color:#a8c4f8;font-size:8.25px">lucru_abaqus</div>
<!-- tray -->
<div class="a" style="left:649.3px;top:524.4px;width:78.7px;height:21.6px;background:linear-gradient(#2aa8f8 0,#109af0 3px,#0c8ee8 12px,#0a84e0 21px);border-left:1px solid #0a60c0"></div>
<svg style="left:0;top:0" width="728" height="546">
<circle cx="649.4" cy="535.3" r="6.4" fill="#3a8af0" stroke="#e8f0ff" stroke-width="0.9"/>
<path d="M650.8 532.5L648.2 535.3L650.8 538.1" stroke="#fff" stroke-width="1.4" fill="none"/>
<circle cx="663.2" cy="535.3" r="5" fill="#b8d058" stroke="#708020" stroke-width="0.6"/>
<rect x="661" y="533" width="4.4" height="4.4" fill="#e8f0a0" stroke="#506010" stroke-width="0.6"/>
<circle cx="676" cy="535.3" r="5" fill="none" stroke="#20a040" stroke-width="2"/>
<path d="M671.5 535.3A4.5 4.5 0 0 1 676 530.8" stroke="#e02020" stroke-width="2" fill="none"/>
<path d="M680.5 535.3A4.5 4.5 0 0 1 676 539.8" stroke="#f0c020" stroke-width="2" fill="none"/>
</svg>
<div class="t" style="left:687.6px;top:530.4px;color:#fff;font-size:8.47px">4:54 PM</div>


<!-- DIALOG -->
<div class="a" style="left:144px;top:74px;width:252px;height:352px;border-radius:6px 6px 0 0;background:#0842d8;border:1px solid #0020a0;border-top-color:#2a6cf0"></div>
<div class="a" style="left:145px;top:75px;width:250px;height:20px;border-radius:5px 5px 0 0;background:linear-gradient(#3d8af7 0,#1a6cf0 2px,#0a5ee8 5px,#0058e4 10px,#0054df 16px,#0048d0 20px)"></div>
<div class="a" style="left:147.5px;top:81.5px;width:11px;height:8.4px;background:#fff;border:1px solid #d8e0f0;border-top:2px solid #fff"></div>
<div class="t" style="transform:scaleX(0.86);left:160.5px;top:81.2px;color:#fff;font-weight:bold;font-size:10.2px;letter-spacing:0.5px">Report Field Output</div>
<div class="a" style="left:377.4px;top:78.3px;width:14px;height:14.2px;border:1px solid #fff;border-radius:2px;background:linear-gradient(135deg,#f0906a,#dc5030 50%,#c83a18)"></div>
<svg style="left:377.4px;top:78.3px" width="14" height="14"><path d="M3.8 3.8L10.2 10.4M10.2 3.8L3.8 10.4" stroke="#fff" stroke-width="1.7"/></svg>
<div class="a" style="left:147px;top:94.5px;width:245.5px;height:328.5px;background:#F0EFE3"></div>

<!-- Step/Frame group -->
<div class="a" style="left:149.8px;top:104.2px;width:239.7px;height:44px;border:1px solid #d6d5c6;border-radius:3px"></div>
<div class="a" style="left:155.5px;top:100px;width:44px;height:8px;background:#F0EFE3"></div>
<div class="t" style="font-size:8.47px;left:157.5px;top:99.9px;color:#1f58e0">Step/Frame</div>
<div class="t" style="word-spacing:1.3px;left:154.7px;top:115.2px;font-size:8.47px">Step: 1, Apply load</div>
<div class="t" style="left:154.7px;top:130px;font-size:8.47px">Frame:&nbsp; 1</div>
<div class="btn" style="left:194.3px;top:129px;width:52.2px;height:12.4px;font-size:8px;line-height:11.4px">Step/Frame...</div>

<!-- tabs -->
<div class="a" style="left:149px;top:166.3px;width:240px;height:232px;border:1px solid #919b9c;background:linear-gradient(#fcfcfe 70%,#f4f3ee)"></div>
<div class="a" style="left:189.3px;top:153.3px;width:30.2px;height:13.5px;border:1px solid #919b9c;border-bottom:none;border-radius:2px 2px 0 0;background:linear-gradient(#fefefe,#ecebe5)"></div>
<div class="t" style="font-size:8.47px;left:194.6px;top:155.6px">Setup</div>
<div class="a" style="left:149.8px;top:151.3px;width:39.8px;height:15.7px;border:1px solid #919b9c;border-top:none;border-bottom:none;background:#fcfcfe"></div>
<div class="a" style="left:149.8px;top:151.3px;width:39.8px;height:2.2px;background:#f2b63a;border-radius:2px 2px 0 0"></div>
<div class="t" style="font-size:8.47px;left:155.2px;top:155px">Variable</div>

<!-- Output Variables group -->
<div class="a" style="left:154.2px;top:176.3px;width:231.6px;height:218.3px;border:1px solid #e0dfd2;border-radius:3px"></div>
<div class="a" style="left:159.5px;top:172px;width:61px;height:8px;background:#fcfcfe"></div>
<div class="t" style="left:161.8px;top:172.2px;color:#1f58e0;font-size:8.69px">Output Variables</div>
<div class="t" style="left:158.8px;top:189px;font-size:8.47px">Position:</div>
<div class="combo" style="left:191px;top:185.5px;width:93px;height:14.9px"><div class="t" style="left:2.3px;top:2.2px;font-size:8.69px">Unique Nodal</div><div class="dd" style="width:9.4px"></div></div>
<div class="t" style="left:158.8px;top:204.9px;font-size:8.47px">Click checkboxes or edit the identifiers shown next to Edit below.</div>

<!-- listbox -->
<div class="a" style="left:158px;top:218.4px;width:123.9px;height:137.2px;border:1px solid #7f9db9;background:#fff;width:224px"></div>
<div class="a" style="left:193.3px;top:219.4px;width:9.4px;height:1.2px;background:#7d9bc0"></div>
<div class="cb" style="left:193.3px;top:224.4px;width:9.4px;height:8.6px"></div><div class="t" style="left:204.9px;top:224.4px;font-size:8.25px">Min. In-Plane Principal</div>
<div class="cb" style="left:193.3px;top:236.5px;width:9.4px;height:8.6px"></div><div class="t" style="left:204.9px;top:236.4px;font-size:8.36px">Max. Principal</div>
<div class="cb" style="left:193.3px;top:248.5px;width:9.4px;height:8.6px"></div><div class="t" style="left:204.9px;top:248.4px;font-size:8.36px">Min. Principal</div>
<div class="cb" style="left:193.3px;top:260.5px;width:9.4px;height:8.6px"></div><div class="t" style="left:204.9px;top:260.4px;font-size:8.36px">E11</div>
<svg style="left:0;top:0" width="400" height="360">
<path d="M165.8 276.4L170.2 280L165.8 283.6Z M165.8 291.2L170.2 294.8L165.8 298.4Z" fill="#000"/>
<path d="M163.8 307.6H171.9L167.85 311.8Z" fill="#000"/>
</svg>
<div class="cb" style="left:178px;top:275.6px;width:9.6px;height:8.8px"></div><div class="t" style="left:189.7px;top:275.2px;font-size:8.53px">RF: Reaction force</div>
<div class="cb" style="left:178px;top:290.4px;width:9.6px;height:8.8px"></div><div class="t" style="left:189.7px;top:290px;font-size:8.42px">S: Stress components</div>
<div class="cb" style="left:178px;top:305.4px;width:9.6px;height:8.8px"><div class="a" style="left:1.6px;top:1.6px;width:4.4px;height:3.6px;background:#3fb93f"></div></div><div class="t" style="left:189.7px;top:305px;font-size:8.25px">U: Spatial displacement</div>
<div class="cb" style="left:193.3px;top:317.6px;width:9.4px;height:8.6px"></div><div class="t" style="left:204.9px;top:317.4px;font-size:8.47px">Magnitude</div>
<div class="cb ck" style="left:193.3px;top:329.4px;width:9.4px;height:8.6px"></div><div class="t" style="left:204.9px;top:329.2px;font-size:8.47px">U1</div>
<div class="cb ck" style="left:193.3px;top:341.4px;width:9.4px;height:8.6px"></div><div class="t" style="left:204.9px;top:341.1px;font-size:8.47px">U2</div>
<div class="a" style="left:204px;top:340.8px;width:11.4px;height:10px;border:1px dotted #555"></div>
<!-- scrollbar -->
<div class="a" style="left:369.4px;top:219.4px;width:10.4px;height:135.4px;background:linear-gradient(90deg,#f3f1ec,#fefefa)"></div>
<div class="a" style="left:369.6px;top:220.5px;width:10px;height:10.7px;border-radius:2px;background:linear-gradient(135deg,#dbe6fe,#b5cafa);border:0.6px solid #b8cbf5"></div>
<svg style="left:369.6px;top:220.5px" width="10" height="11"><path d="M2.6 6.8L5 4.3L7.4 6.8" stroke="#4d6185" stroke-width="1.4" fill="none"/></svg>
<div class="a" style="left:369.6px;top:258.4px;width:10px;height:82px;border-radius:2px;background:linear-gradient(90deg,#c8d7fb,#b9cdfa);border:0.6px solid #b0c4f2"></div>
<svg style="left:369.6px;top:295px" width="10" height="8"><path d="M3 1.5H7M3 3.5H7M3 5.5H7" stroke="#eef3ff" stroke-width="0.8"/><path d="M3 2.2H7M3 4.2H7M3 6.2H7" stroke="#8aa6e0" stroke-width="0.5"/></svg>
<div class="a" style="left:369.6px;top:342.5px;width:10px;height:11.2px;border-radius:2px;background:linear-gradient(135deg,#dbe6fe,#b5cafa);border:0.6px solid #b8cbf5"></div>
<svg style="left:369.6px;top:342.5px" width="10" height="11"><path d="M2.6 4.3L5 6.8L7.4 4.3" stroke="#4d6185" stroke-width="1.4" fill="none"/></svg>


<!-- edit -->
<div class="t" style="left:158.6px;top:362.3px;font-size:8.47px">Edit:</div>
<div class="a" style="left:178px;top:359.3px;width:203.7px;height:14.3px;border:1px solid #7f9db9;background:#fff"></div>
<div class="t" style="left:179.7px;top:362.3px;font-size:8.47px">U.U1,U.U2</div>
<div class="t" style="left:158.6px;top:380px;font-size:8.47px">Section point:</div>
<div class="a" style="left:212.2px;top:380.3px;width:8.6px;height:8.6px;border:1px solid #d3d1c6;border-radius:50%;background:#f2f1ea"></div>
<div class="t" style="left:224px;top:380.5px;font-size:8.4px;color:#aca899">All</div>
<div class="a" style="left:237.8px;top:380.3px;width:8.6px;height:8.6px;border:1px solid #d3d1c6;border-radius:50%;background:#f2f1ea"></div>
<div class="t" style="left:249.4px;top:380px;font-size:8.47px;color:#aca899">Select</div>
<div class="a" style="left:275.3px;top:377.7px;width:40.3px;height:13px;border:1px solid #c9c7ba;border-radius:2px;background:#f4f3ee"></div>
<div class="t" style="left:277.5px;top:379.5px;font-size:8.47px;color:#aca899">Settings...</div>

<!-- buttons -->
<div class="btn" style="left:156.9px;top:406.8px;width:41.6px;height:12.8px;line-height:11.6px;font-size:7.9px">OK</div>
<div class="btn" style="left:218.1px;top:406.8px;width:41.6px;height:12.8px;line-height:11.6px;font-size:7.9px">Apply</div>
<div class="btn" style="left:279.4px;top:406.8px;width:41.1px;height:12.8px;line-height:11.6px;font-size:7.9px">Defaults</div>
<div class="btn" style="left:340.1px;top:406.8px;width:41.6px;height:12.8px;line-height:11.6px;font-size:7.9px">Cancel</div>


</body></html>
